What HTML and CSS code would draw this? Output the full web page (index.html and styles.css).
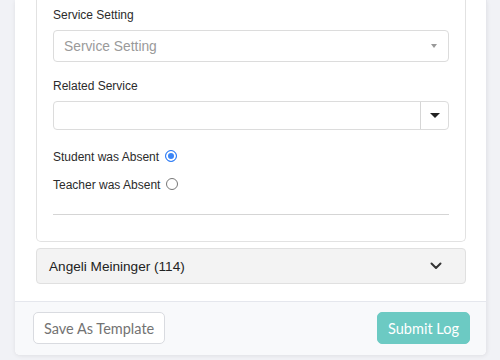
FILE: index.html
```html
<!DOCTYPE html>
<html lang="en">
<head>
    <meta charset="UTF-8">
    <meta name="viewport" content="width=device-width, initial-scale=1.0">
    <title>Service Log</title>
    <link rel="stylesheet" href="styles.css">
</head>
<body>
    <div class="page">
        <div class="modal">
            <div class="modal-body">
                <div class="card">
                    <label class="field-label">Service Setting</label>
                    <div class="select placeholder">
                        <span>Service Setting</span>
                        <span class="caret-small"></span>
                    </div>

                    <label class="field-label">Related Service</label>
                    <div class="select combo">
                        <span class="combo-input"></span>
                        <span class="combo-btn"><span class="caret"></span></span>
                    </div>

                    <div class="radio-row">
                        <span>Student was Absent</span>
                        <span class="radio checked"></span>
                    </div>
                    <div class="radio-row">
                        <span>Teacher was Absent</span>
                        <span class="radio"></span>
                    </div>

                    <hr class="divider">
                </div>

                <button class="accordion-toggle">
                    <span>Angeli Meininger (114)</span>
                    <svg width="12" height="8" viewBox="0 0 12 8">
                        <polyline points="1.5,1.5 6,6 10.5,1.5" fill="none" stroke="#333" stroke-width="2" stroke-linecap="round" stroke-linejoin="round"/>
                    </svg>
                </button>
            </div>

            <footer class="modal-footer">
                <button class="btn btn-outline">Save As Template</button>
                <button class="btn btn-primary">Submit Log</button>
            </footer>
        </div>
    </div>
</body>
</html>
```

FILE: styles.css
```css
:root {
    --page-bg: #f1f2f6;
    --border-color: #dedede;
    --text-color: #2b2b2b;
    --muted: #9a9a9a;
    --teal: #6ccac3;
}

* {
    box-sizing: border-box;
}

body {
    margin: 0;
    font-family: "Liberation Sans", Arial, sans-serif;
    color: var(--text-color);
    background-color: var(--page-bg);
}

.page {
    width: 500px;
    height: 360px;
    overflow: hidden;
    padding: 0 13px 0 15px;
}

.modal {
    background: #fff;
    border-radius: 0 0 5px 5px;
    box-shadow: 0 1px 4px rgba(0, 0, 0, 0.08);
    border-right: 1px solid #e6e7ec;
}

.modal-body {
    padding: 0 20px 17px 21px;
}

.card {
    border: 1px solid #e2e2e2;
    border-top: none;
    border-radius: 0 0 5px 5px;
    padding: 6px 16px 26px 16px;
}

.field-label {
    display: block;
    font-size: 12px;
    line-height: 18px;
    margin-bottom: 6px;
}

.select {
    display: flex;
    align-items: center;
    border: 1px solid #dcdcdc;
    border-radius: 4px;
    background: #fff;
}

.select.placeholder {
    height: 32px;
    padding: 0 10px 0 10px;
    justify-content: space-between;
    color: var(--muted);
    font-size: 13.8px;
    margin-bottom: 15px;
}

.caret-small {
    width: 0;
    height: 0;
    border-left: 3.5px solid transparent;
    border-right: 3.5px solid transparent;
    border-top: 4px solid #999;
    margin-right: 1px;
}

.select.combo {
    height: 29px;
    margin-bottom: 17px;
}

.combo-input {
    flex: 1;
}

.combo-btn {
    width: 28px;
    height: 100%;
    border-left: 1px solid #d6d6d6;
    display: flex;
    align-items: center;
    justify-content: center;
}

.caret {
    width: 0;
    height: 0;
    border-left: 5px solid transparent;
    border-right: 5px solid transparent;
    border-top: 5px solid #222;
}

.radio-row {
    display: flex;
    align-items: center;
    gap: 6px;
    font-size: 12px;
    line-height: 20px;
    margin-bottom: 8px;
}

.radio {
    width: 12px;
    height: 12px;
    border-radius: 50%;
    border: 1px solid #777;
    background: #fff;
    margin-top: -3px;
}

.radio.checked {
    border-color: #2f7df6;
    background: #3a85f7;
    box-shadow: inset 0 0 0 2px #fff;
}

.divider {
    border: none;
    border-top: 1px solid #d5d5d5;
    margin: 19px 0 0 0;
}

.accordion-toggle {
    margin-top: 6px;
    width: 100%;
    height: 36px;
    display: flex;
    justify-content: space-between;
    align-items: center;
    padding: 0 23px 0 12px;
    background: #f3f3f3;
    border: 1px solid #e0e0e0;
    border-radius: 4px;
    font-family: "Liberation Sans", Arial, sans-serif;
    font-size: 13.6px;
    color: #222;
}

.modal-footer {
    display: flex;
    justify-content: space-between;
    padding: 10px 16px 11px 18px;
    background: #f8f9fb;
    border-top: 1px solid #e5e7ed;
    border-radius: 0 0 5px 5px;
}

.btn {
    height: 32px;
    border-radius: 5px;
    font-family: Lato, "Open Sans", sans-serif;
    font-size: 14.5px;
    padding: 0 10px;
    white-space: nowrap;
}

.btn-outline {
    background: #fff;
    border: 1px solid #d9dbe0;
    color: #737373;
    width: 132px;
}

.btn-primary {
    background: var(--teal);
    border: 1px solid var(--teal);
    color: #fff;
    width: 93px;
}
```
